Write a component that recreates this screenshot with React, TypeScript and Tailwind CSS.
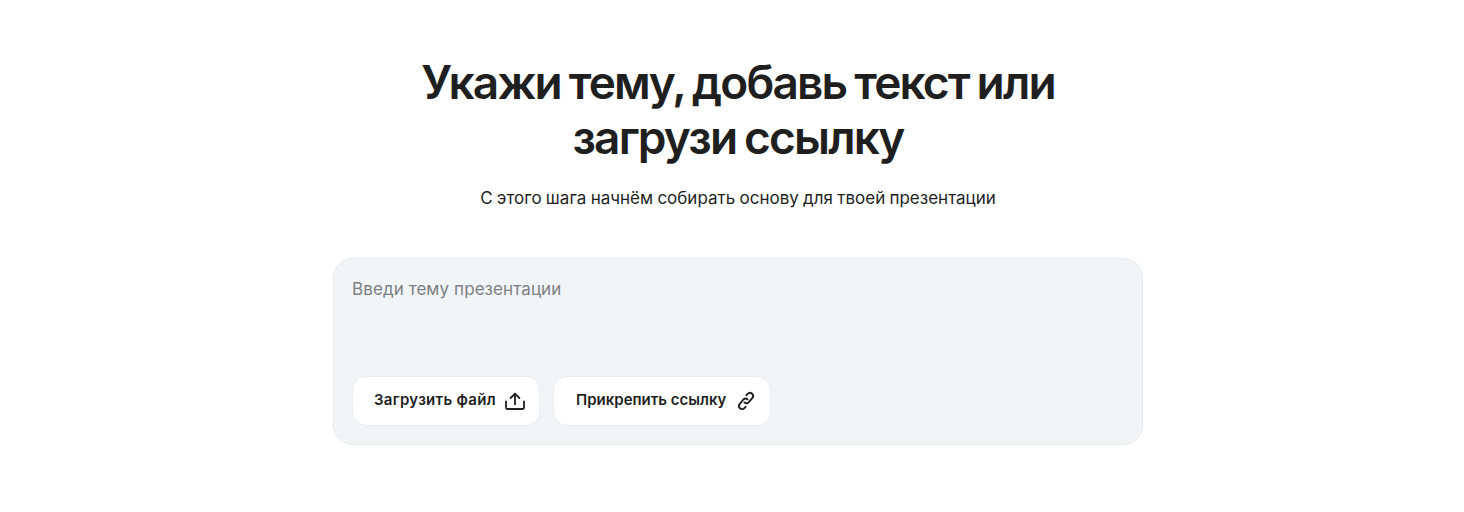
const UploadIcon = () => (
  <svg width="20" height="18" viewBox="0 0 20 18" fill="none" stroke="#1f1f1f" strokeWidth="1.8" strokeLinejoin="round">
    <path d="M1 9.5v6.3c0 .7.5 1.2 1.2 1.2h15.6c.7 0 1.2-.5 1.2-1.2V9.5" strokeLinecap="round" />
    <path d="M10 13V2" />
    <path d="M5.6 6 10 1.6 14.4 6" strokeLinecap="round" />
  </svg>
);

const LinkIcon = () => (
  <svg width="20" height="20" viewBox="0 0 20 20" fill="none" stroke="#1f1f1f" strokeWidth="1.9" strokeLinecap="round" strokeLinejoin="round">
    <path d="M8.4 11.4c1.3 1.2 3 1.1 4.2-.1l3.6-4.1c1.2-1.4 1.1-3.3-.2-4.5s-3.2-1.1-4.4.2L10.4 4.2" />
    <path d="M11.6 8.4c-1.3-1.2-3-1.1-4.2.1l-3.6 4.3c-1.2 1.4-1.1 3.3.2 4.5s3.2 1.1 4.4-.2l1.2-1.3" />
  </svg>
);

export default function App() {
  return (
    <div className="w-[1464px] h-[512px] bg-white flex flex-col items-center pl-[12px] pt-[55px] font-['Inter',sans-serif] text-[#1f1f1f] overflow-hidden">
      <h1 className="text-[46px] leading-[55px] font-semibold text-center tracking-[-0.04em] [word-spacing:-0.04em]">
        Укажи тему, добавь текст или
        <br />
        загрузи ссылку
      </h1>
      <p className="mt-[21px] text-[17px] leading-[24px] text-center [word-spacing:-0.5px]">
        С этого шага начнём собирать основу для твоей презентации
      </p>
      <div className="mt-[48px] w-[810px] h-[187px] bg-[#f2f5f8] border border-[#e6e9ed] rounded-[20px] px-[18px] pt-[19px] pb-[18px] flex flex-col justify-between">
        <div className="text-[17px] leading-[22px] text-[#7d8083] tracking-[0.005em]">Введи тему презентации</div>
        <div className="flex gap-[13px]">
          <button className="h-[50px] w-[188px] bg-white border border-[#e9edf1] rounded-[14px] pl-[21px] pb-[1px] flex items-center gap-[9px] text-[15px] font-semibold tracking-[0.02em]">
            Загрузить файл
            <UploadIcon />
          </button>
          <button className="h-[50px] w-[218px] bg-white border border-[#e9edf1] rounded-[14px] pl-[22px] pb-[1px] flex items-center gap-[10px] text-[15px] font-semibold">
            Прикрепить ссылку
            <LinkIcon />
          </button>
        </div>
      </div>
    </div>
  );
}
